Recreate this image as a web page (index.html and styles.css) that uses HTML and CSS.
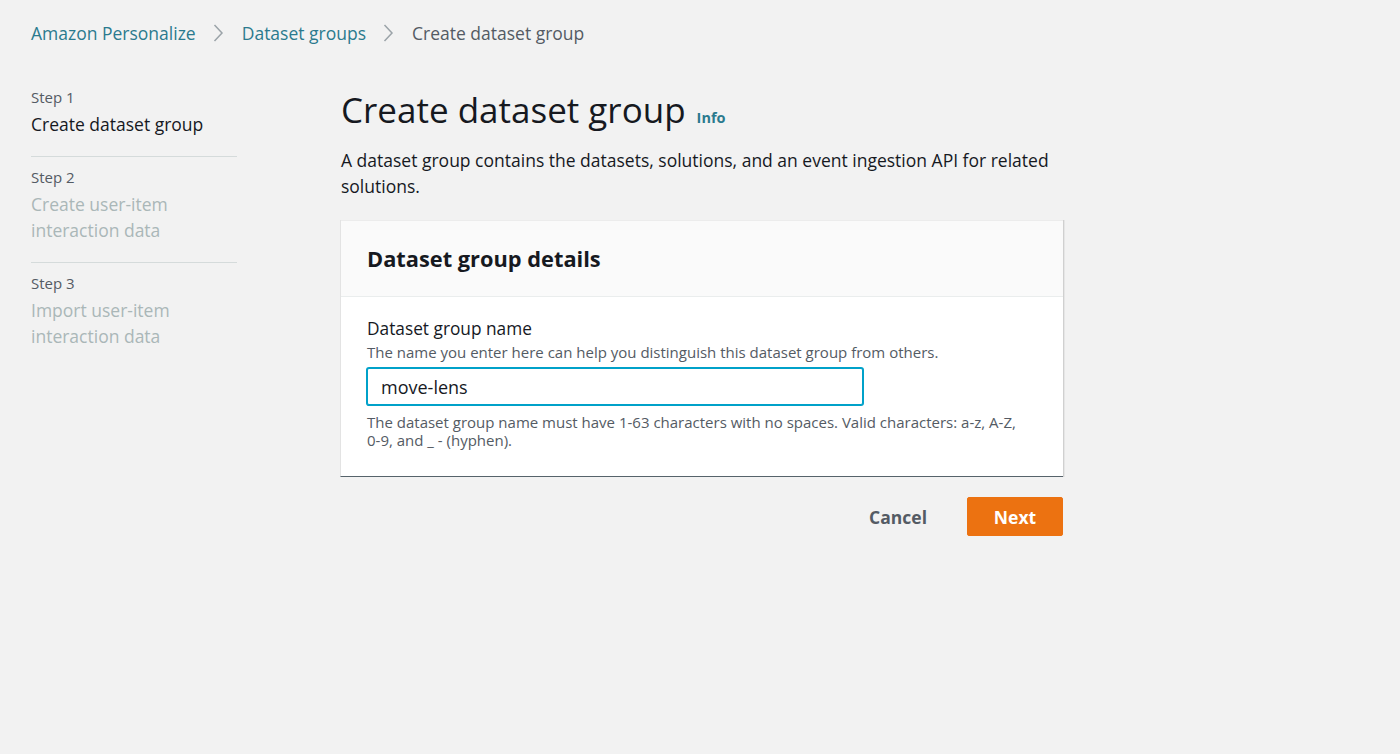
FILE: index.html
```html
<!DOCTYPE html>
<html lang="en">
<head>
<meta charset="utf-8">
<title>Create dataset group</title>
<link rel="stylesheet" href="styles.css">
</head>
<body>
<nav class="breadcrumbs">
  <a class="crumb-link" href="#">Amazon Personalize</a>
  <svg class="chev" viewBox="0 0 12 20" width="12" height="20"><path d="M2.5 2 L10 10 L2.5 18" fill="none" stroke="#9ba3a8" stroke-width="1.5"/></svg>
  <a class="crumb-link" href="#">Dataset groups</a>
  <svg class="chev" viewBox="0 0 12 20" width="12" height="20"><path d="M2.5 2 L10 10 L2.5 18" fill="none" stroke="#9ba3a8" stroke-width="1.5"/></svg>
  <span class="crumb-current">Create dataset group</span>
</nav>
<div class="layout">
  <aside class="steps">
    <div class="step">
      <div class="step-num">Step 1</div>
      <div class="step-title active">Create dataset group</div>
    </div>
    <div class="step">
      <div class="step-num">Step 2</div>
      <div class="step-title">Create user-item interaction data</div>
    </div>
    <div class="step">
      <div class="step-num">Step 3</div>
      <div class="step-title">Import user-item interaction data</div>
    </div>
  </aside>
  <main class="main">
    <div class="title-row">
      <h1 class="title">Create dataset group</h1>
      <a class="info" href="#">Info</a>
    </div>
    <p class="desc">A dataset group contains the datasets, solutions, and an event ingestion API for related solutions.</p>
    <section class="card">
      <div class="card-head"><h2 class="card-title">Dataset group details</h2></div>
      <div class="card-body">
        <label class="label" for="dg">Dataset group name</label>
        <div class="hint">The name you enter here can help you distinguish this dataset group from others.</div>
        <input id="dg" class="input" type="text" value="move-lens">
        <div class="constraint">The dataset group name must have 1-63 characters with no spaces. Valid characters: a-z, A-Z, 0-9, and _ - (hyphen).</div>
      </div>
    </section>
    <div class="actions">
      <button class="btn-cancel">Cancel</button>
      <button class="btn-next">Next</button>
    </div>
  </main>
</div>
</body>
</html>
```
FILE: styles.css
```css
* { box-sizing: border-box; }
html, body { margin: 0; padding: 0; }
body {
  background: #f2f2f2;
  font-family: "Open Sans", "Liberation Sans", Arial, sans-serif;
  color: #16191f;
  height: 754px;
}
.breadcrumbs {
  display: flex;
  align-items: center;
  padding: 21px 0 0 31px;
  height: 44px;
  font-size: 17.5px;
}
.crumb-link { color: #2b7a8e; text-decoration: none; }
.crumb-current { color: #545b64; }
.chev { margin: 0 18px 0 16px; }
.layout {
  display: flex;
  padding-top: 41px;
}
.steps {
  width: 206px;
  margin-left: 31px;
  flex: none;
}
.step {
  border-bottom: 1px solid #d5dbdb;
  padding-bottom: 19px;
  margin-bottom: 8px;
}
.step:last-child { border-bottom: none; }
.step-num { font-size: 15px; color: #545b64; line-height: 24px; }
.step-title { font-size: 17.5px; line-height: 26px; margin-top: 2px; color: #aab7b8; width: 180px; }
.step-title.active { color: #16191f; }
.main {
  margin-left: 104px;
  width: 722px;
  flex: none;
}
.title-row { display: flex; align-items: baseline; margin-top: 3px; }
.title { font-size: 35px; font-weight: 400; margin: 0; line-height: 44px; }
.info { font-size: 14.5px; font-weight: 700; color: #2b7a8e; text-decoration: none; margin-left: 11px; }
.desc { font-size: 17.5px; line-height: 26px; margin: 15px 0 21px; }
.card {
  margin-left: -1px;
  background: #fff;
  border-left: 1px solid #e3e3e3;
  border-bottom: 1px solid #56636b;
  box-shadow: 1px 0 0 #d0d0d0, 2px 0 0 #e6e6e6;
}
.card-head {
  background: #fafafa;
  border-top: 1px solid #ececec;
  border-bottom: 1px solid #eaeded;
  height: 77px;
  padding: 0 26px;
  display: flex;
  align-items: center;
}
.card-title { font-size: 21.8px; font-weight: 700; margin: 0; }
.card-body { padding: 20px 26px 27px; }
.label { display: block; font-size: 17.3px; line-height: 24px; }
.hint { font-size: 15px; line-height: 22px; margin-top: 0; color: #545b64; }
.input {
  display: block;
  width: 496px;
  height: 37px;
  margin-top: 5px;
  border: 1px solid #00a1c9;
  border-radius: 2px;
  box-shadow: 0 0 0 1px #00a1c9;
  padding: 0 13px;
  font: inherit;
  font-size: 18px;
  color: #16191f;
  outline: none;
}
.constraint { font-size: 15px; line-height: 18px; color: #545b64; margin-top: 8px; width: 656px; }
.actions {
  display: flex;
  justify-content: flex-end;
  align-items: center;
  margin-top: 20px;
}
.btn-cancel {
  font: inherit; font-size: 17.5px; font-weight: 700; color: #545b64;
  background: none; border: none; padding: 0 20px; margin-right: 20px;
}
.btn-next {
  font: inherit; font-size: 17.5px; font-weight: 700; color: #fff;
  background: #ec7211; border: 1px solid #ec7211; border-radius: 2px;
  width: 96px; height: 39px;
}
```
